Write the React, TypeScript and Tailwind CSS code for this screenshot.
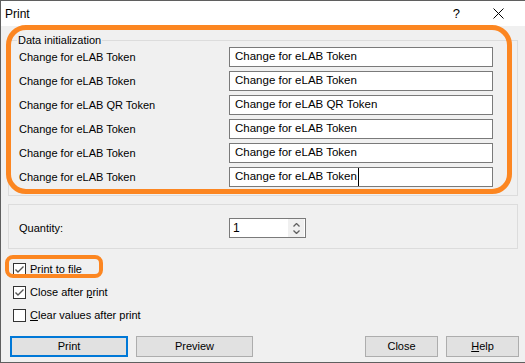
import React from "react";

const rows = [
  "Change for eLAB Token",
  "Change for eLAB Token",
  "Change for eLAB QR Token",
  "Change for eLAB Token",
  "Change for eLAB Token",
  "Change for eLAB Token"
];

function CheckBox(props: { checked: boolean }) {
  return (
    <div className="flex h-[13px] w-[13px] items-center justify-center border border-[#333333] bg-white">
      {props.checked && (
        <svg width="11" height="11" viewBox="0 0 11 11">
          <path d="M1.5 5.5 L4 8 L9.5 2.5" stroke="#555" strokeWidth="1.4" fill="none" />
        </svg>
      )}
    </div>
  );
}

function CheckRow(props: { checked: boolean; children: React.ReactNode }) {
  return (
    <div className="flex h-[23px] items-center gap-[4px] pl-[12px]">
      <CheckBox checked={props.checked} />
      <span>{props.children}</span>
    </div>
  );
}

function Btn(props: { label: React.ReactNode; className?: string; primary?: boolean }) {
  return (
    <div
      className={
        "flex h-[21px] items-center justify-center bg-[#e1e1e1] " +
        (props.primary ? "border-2 border-[#0078d7] " : "border border-[#adadad] ") +
        (props.className || "")
      }
    >
      {props.label}
    </div>
  );
}

export default function App() {
  return (
    <div
      className="relative flex h-[363px] w-[525px] flex-col border-b border-l border-t border-[#5f5f5f] bg-[#f0f0f0] text-[11px] text-black"
      style={{ fontFamily: '"Liberation Sans", Arial, sans-serif' }}
    >
      {/* title bar */}
      <div className="flex h-[25px] shrink-0 items-center bg-white pl-[4px] text-[12px]">
        <span>Print</span>
        <div className="flex-1" />
        <span className="text-[13px]">?</span>
        <svg className="ml-[33px] mr-[21px]" width="11" height="11" viewBox="0 0 11 11">
          <path d="M0.5 0.5 L10.5 10.5 M10.5 0.5 L0.5 10.5" stroke="#000" strokeWidth="1" />
        </svg>
      </div>

      {/* data initialization */}
      <fieldset className="ml-[7px] mt-[7px] w-[510px] border border-[#dcdcdc] pb-[8px] pl-[10px]">
        <legend className="ml-[-2px] px-[1px] leading-[14px]">Data initialization</legend>
        <div className="flex flex-col gap-[4px]">
          {rows.map((r, i) => (
            <div key={i} className="flex h-[20px] items-center">
              <span className="w-[210px]">{r}</span>
              <div className="flex h-[20px] w-[264px] items-center border border-[#7a7a7a] bg-white pl-[5px] text-[11.5px]">
                <span className={i === rows.length - 1 ? "border-r border-black pr-[1px]" : ""}>{r}</span>
              </div>
            </div>
          ))}
        </div>
      </fieldset>

      {/* quantity */}
      <div className="ml-[7px] mt-[8px] flex h-[45px] w-[510px] items-start border border-[#dcdcdc] pl-[10px] pt-[13px]">
        <span className="mt-[2px] w-[210px]">Quantity:</span>
        <div className="flex h-[20px] w-[77px] items-center border border-[#7a7a7a] bg-white pl-[3px]">
          <span className="flex-1 text-[12px]">1</span>
          <div className="mr-[1px] flex h-[18px] w-[16px] flex-col items-center justify-center gap-[3px] bg-[#f0f0f0]">
            <svg width="7" height="4" viewBox="0 0 7 4">
              <path d="M0.5 3.5 L3.5 0.5 L6.5 3.5" stroke="#606060" strokeWidth="1.3" fill="none" />
            </svg>
            <svg width="7" height="4" viewBox="0 0 7 4">
              <path d="M0.5 0.5 L3.5 3.5 L6.5 0.5" stroke="#606060" strokeWidth="1.3" fill="none" />
            </svg>
          </div>
        </div>
      </div>

      {/* options */}
      <div className="mt-[9px] flex flex-col">
        <CheckRow checked>
          Print to <u>f</u>ile
        </CheckRow>
        <CheckRow checked>
          Close after <u>p</u>rint
        </CheckRow>
        <CheckRow checked={false}>
          <u>C</u>lear values after print
        </CheckRow>
      </div>

      {/* buttons */}
      <div className="mt-[9px] flex pl-[9px] pr-[6px]">
        <Btn primary label="Print" className="w-[118px]" />
        <Btn label="Preview" className="ml-[8px] w-[117px]" />
        <div className="flex-1" />
        <Btn label="Close" className="w-[73px]" />
        <Btn label={<span><u>H</u>elp</span>} className="ml-[8px] w-[73px]" />
      </div>

      {/* orange annotation marks */}
      <div className="absolute left-[5px] top-[24px] h-[169px] w-[506px] rounded-[20px] border-[5px] border-[#fc8621]" />
      <div className="absolute left-[4px] top-[254px] h-[23px] w-[98px] rounded-[8px] border-[4px] border-[#fc8621]" />
    </div>
  );
}
